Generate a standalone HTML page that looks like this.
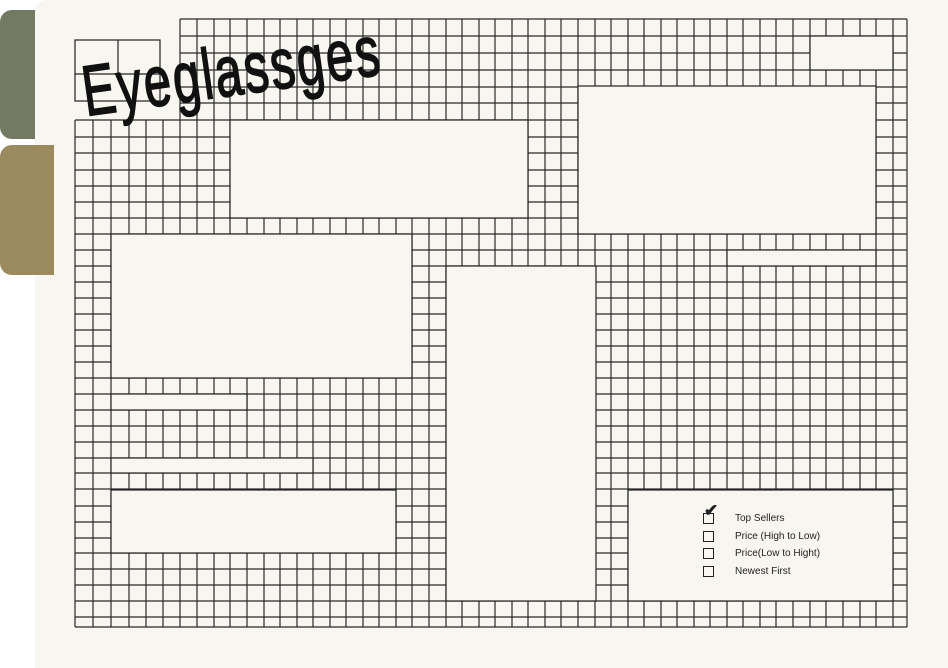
<!DOCTYPE html>
<html><head><meta charset="utf-8"><style>
html,body{margin:0;padding:0;width:948px;height:668px;background:#fff;overflow:hidden;font-family:"Liberation Sans",sans-serif}
.tab1{position:absolute;left:0;top:10px;width:48px;height:129px;background:#737a63;border-radius:12px 0 0 12px}
.tab2{position:absolute;left:0;top:145px;width:54px;height:130px;background:#9a8a5e;border-radius:12px 0 0 12px;z-index:2}
.panel{position:absolute;left:35px;top:0;width:913px;height:668px;background:#f8f6f0;border-radius:12px 0 0 0}
svg{position:absolute;left:0;top:0}
.opts{position:absolute;left:703px;top:510px;font-size:10px;color:#222}
.opt{position:relative;height:17.7px;line-height:17.7px;padding-left:32px}
.cb{position:absolute;left:0;top:3px;width:9px;height:9px;border:1.2px solid #222}
</style></head><body>
<div class="tab1"></div><div class="tab2"></div><div class="panel"></div>
<svg width="948" height="668" viewBox="0 0 948 668">
<g stroke="#2a2a2a" stroke-width="1.2" fill="none">
<path d="M180 19H907M180 36H907M180 53H907M180 70H907M180 87H907M180 103H907
M75 120H907M75 137H907M75 153H907M75 170H907M75 186H907M75 202H907M75 218H907M75 234H907M75 250H907M75 266H907M75 282H907M75 298H907M75 314H907M75 330H907M75 346H907M75 362H907M75 378H907M75 394H907M75 410H907M75 426H907M75 442H907M75 458H907M75 473H907M75 489H907M75 506H907M75 522H907M75 538H907M75 553H907M75 569H907M75 585H907M75 601H907M75 617H907M75 627H907
M75 120V627M93 120V627M111 120V627M129 120V627M146 120V627M163 120V627
M180 19V627M197 19V627M214 19V627M230 19V627M247 19V627M264 19V627M280 19V627M297 19V627M313 19V627M330 19V627M346 19V627M363 19V627M379 19V627M396 19V627M412 19V627M429 19V627M446 19V627M462 19V627M479 19V627M495 19V627M512 19V627M528 19V627M545 19V627M561 19V627M578 19V627M595 19V627M611 19V627M628 19V627M644 19V627M661 19V627M677 19V627M694 19V627M710 19V627M727 19V627M743 19V627M760 19V627M776 19V627M793 19V627M810 19V627M826 19V627M843 19V627M860 19V627M876 19V627M893 19V627M907 19V627"/>
</g>
<g fill="#f8f6f0" stroke="#222" stroke-width="1.2">
<rect x="810" y="36" width="83" height="34"/>
<rect x="230" y="120" width="298" height="98"/>
<rect x="578" y="86" width="298" height="148"/>
<rect x="111" y="234" width="301" height="144"/>
<rect x="446" y="266" width="150" height="335"/>
<rect x="111" y="490" width="285" height="63"/>
<rect x="628" y="490" width="265" height="111"/>
<rect x="111" y="394" width="136" height="16"/>
<rect x="111" y="458" width="202" height="15"/>
<rect x="727" y="250" width="149" height="16"/>
<rect x="75" y="40" width="85" height="61"/>
</g>
<path d="M118 40V74M75 74H160" stroke="#222" stroke-width="1.2"/>
<g transform="translate(86 116) rotate(-8) scale(0.72 1.05)">
<text x="0" y="0" font-family="Liberation Sans, sans-serif" font-size="68" fill="#111" stroke="#111" stroke-width="1.5" letter-spacing="3">Eyeglassges</text>
</g>
</svg>
<div class="opts">
<div class="opt"><span class="cb"></span><span style="position:absolute;left:1px;top:-8px;font-size:17px;font-weight:bold">✔</span>Top Sellers</div>
<div class="opt"><span class="cb"></span>Price (High to Low)</div>
<div class="opt"><span class="cb"></span>Price(Low to Hight)</div>
<div class="opt"><span class="cb"></span>Newest First</div>
</div>
</body></html>
